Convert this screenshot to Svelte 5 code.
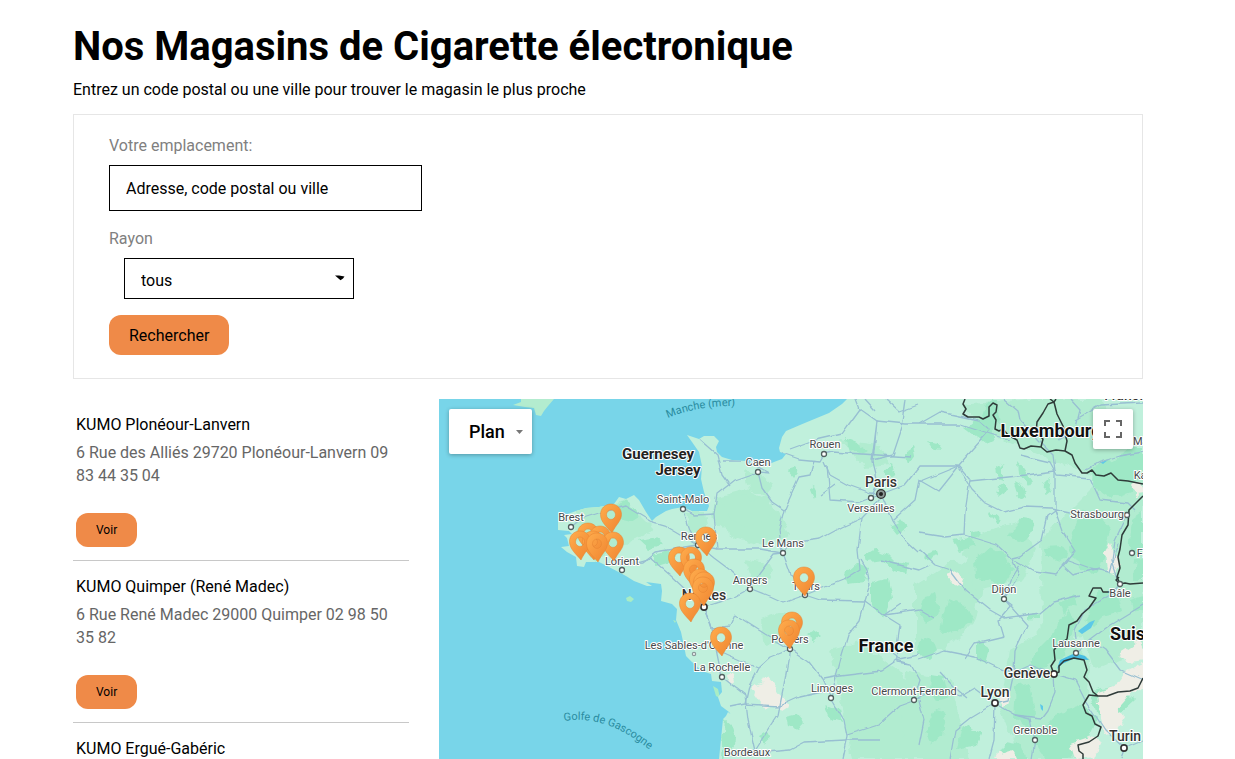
<script>
  const stores = [
    { name: 'KUMO Plonéour-Lanvern', address: '6 Rue des Alliés 29720 Plonéour-Lanvern 09 83 44 35 04' },
    { name: 'KUMO Quimper (René Madec)', address: '6 Rue René Madec 29000 Quimper 02 98 50 35 82' },
    { name: 'KUMO Ergué-Gabéric' }
  ];

  // Head centre of each store pin, back to front
  const pins = [
    [611, 515], [588, 534], [600, 537], [593, 542], [580, 542], [613, 543], [597, 544],
    [706, 538], [679, 558], [691, 558], [694, 570], [700, 580], [704, 583], [703, 588], [690, 604],
    [804, 578], [792, 623], [789, 631], [721, 638]
  ];

  // Label text, centre x, baseline y, kind
  const labels = [
    ['Brest', 571, 521, 'city'], ['Lorient', 622, 565, 'city'], ['Saint-Malo', 683, 503, 'city'],
    ['Rennes', 699, 540, 'city'], ['Caen', 758, 466, 'city'], ['Rouen', 825, 448, 'city'],
    ['Versailles', 871, 512, 'city'], ['Le Mans', 783, 547, 'city'], ['Angers', 750, 584, 'city'],
    ['Tours', 806, 590, 'city'], ['Poitiers', 790, 643, 'city'], ["Les Sables-d'Olonne", 694, 649, 'city'],
    ['La Rochelle', 722, 671, 'city'], ['Limoges', 832, 692, 'city'], ['Clermont-Ferrand', 914, 695, 'city'],
    ['Bordeaux', 747, 756, 'city'], ['Strasbourg', 1097, 518, 'city'], ['Dijon', 1004, 593, 'city'],
    ['Bâle', 1120, 597, 'city'], ['Lausanne', 1076, 647, 'city'], ['Grenoble', 1035, 734, 'city'],
    ['Fribourg', 1157, 557, 'city'], ['Mannheim', 1159, 445, 'city'], ['Karlsruhe', 1157, 479, 'city'],
    ['Paris', 881, 487, 'town'], ['Nantes', 704, 600, 'town'], ['Lyon', 995, 697, 'town'],
    ['Genève', 1027, 678, 'town'], ['Turin', 1125, 741, 'town'], ['Francfort', 1133, 400, 'town'],
    ['Guernesey', 658, 459, 'region'], ['Jersey', 678, 475, 'region'],
    ['France', 886, 652, 'country'], ['Luxembourg', 1051, 437, 'country'], ['Suisse', 1137, 640, 'country']
  ];

  const dots = [
    [571, 527], [622, 570], [683, 509], [698, 545], [758, 472], [824, 454], [871, 498], [783, 553],
    [750, 589], [805, 595], [790, 649], [722, 677], [831, 698], [914, 700], [1127, 515], [1004, 599],
    [1120, 584], [1076, 653], [1035, 740], [1132, 553]
  ];
  const bigDots = [[704, 607], [995, 703], [1054, 674], [1124, 748]];

  const roads = [
    'M856 399L860 409L849 424L842 434L812 441L790 449',
    'M860 409L877 421L906 424L960 424L1010 440',
    'M906 399L902 428L893 455L872 460L877 421L873 462L878 482L871 498',
    'M782 453L799 459L820 461L824 454L832 452L878 455L910 457',
    'M722 461L746 461L770 473L758 472L735 480L717 494L714 514L717 549L760 549L783 553',
    'M700 440L717 455L722 475L730 486',
    'M758 472L762 488L772 502L784 510L779 530L781 547L783 553',
    'M784 510L793 490L799 477L810 475L814 460',
    'M824 461L830 475L848 485L870 493L881 494L892 520L905 540L918 552',
    'M827 465L830 500L860 502L881 494L905 485L920 466L957 466',
    'M783 553L790 543L820 539L842 527L862 518L881 498',
    'M862 518L858 550L860 569L843 580L805 595',
    'M783 553L791 575L799 587L805 595L820 600L865 601L884 615L900 625L897 645L898 662L910 664',
    'M571 527L581 519L600 513L625 506L650 521L664 525L698 545L717 549',
    'M600 540L622 566L650 558L670 575L704 607',
    'M622 563L642 562L655 552L698 545L690 530L683 509L695 515L714 514',
    'M698 545L714 558L730 570L750 589L770 597L783 603L805 595',
    'M698 545L693 572L704 607L711 624L722 677',
    'M704 607L735 597L750 589L760 573L774 554L783 553',
    'M704 607L712 628L730 626L735 615L765 634L790 649',
    'M722 677L745 695L748 720L755 751L768 730L778 715L783 690L790 649',
    'M722 653L740 661L758 668L749 686L745 704L730 707',
    'M758 668L770 657L790 649L809 662L822 679L831 698L844 720L847 736L842 759',
    'M745 704L780 706L800 697L831 690',
    'M767 752L790 750L805 742L845 740L880 740',
    'M847 735L878 725L900 705L914 700L920 680L911 664L897 660L881 671L840 676L824 679',
    'M865 601L870 585L867 570L861 560',
    'M865 601L860 620L848 635L842 655L835 681L831 698',
    'M884 615L920 610L934 618M900 604L884 615M919 660L945 651L975 657L1000 669L1014 672',
    'M965 659L975 644L1004 637L999 620L1012 605L1004 599L1027 625L1015 651L1014 672L1008 700L995 703',
    'M919 480L938 491L958 466L990 430L978 420L940 412L919 424M958 466L970 480L965 512L964 535L945 537L919 533',
    'M919 482L958 466M970 481L1018 476L1055 471L1055 510L1048 515L1042 540L1020 556L1012 558',
    'M957 466L972 490L984 502L1004 512L1025 507L1050 508L1070 512',
    'M964 535L997 545L1012 559L1019 575L1004 599M1012 559L1035 572L1055 575L1068 560L1090 568L1110 572L1119 543',
    'M919 550L935 565L950 570L965 590L990 610L1004 618L1040 613L1053 602L1080 595',
    'M1055 471L1053 455L1038 440L1020 420L1018 410L1005 399',
    'M1020 455L1050 462L1057 475L1090 478L1100 500L1127 503L1134 510',
    'M1055 510L1062 530L1075 550L1062 565L1073 575L1100 568',
    'M1059 440L1075 430L1080 410L1070 399M1085 470L1100 462L1120 456L1143 452M1075 420L1100 405L1143 403',
    'M1127 515L1115 540L1112 560L1120 584L1110 595L1085 610L1075 630L1076 640',
    'M914 700L940 689L960 697L975 688L995 703L1015 715L1030 719L1035 740L1032 759',
    'M995 703L994 740L989 759M995 703L970 718L955 730L950 759M940 672L952 685L967 698',
    'M1014 672L1030 665L1054 674L1055 693L1048 710L1042 718L1015 715',
    'M1054 674L1075 680L1085 700L1105 730L1124 748L1143 740M1124 748L1120 759',
    'M1076 653L1090 640L1110 625L1143 605M1090 640L1105 650L1120 670L1143 680',
    'M919 655L900 659L880 645M919 700L924 720L919 745M865 399L875 410M886 399L900 412L919 405',
    'M880 560L919 570L930 565M893 520L915 500L919 480M835 484L820 495M1004 599L1010 580L1019 565'
  ];

  const woods = [
    'M614 505l12-4 8 6 5 9-8 5-12-3z', 'M655 553l12-3 9 5-7 7-14 4z', 'M574 536l14-4 9 6-11 6z', 'M640 540l12-2 10 7-12 4z',
    'M788 470l7-2 3 4-4 5z',
    'M809 490l6-4 2 4-4 9z', 'M845 437l12 5 12 8-8 3-15-6z', 'M903 454l11-7 2 10-10 6z', 'M884 471l10-8 3 11-10 4z',
    'M889 525l12-5 6 8-10 7z', 'M863 555l10-6 15 5 8 8 12 3-2 8-12-3-10-9-16 2z', 'M845 575l13-12 10 5-3 14-17 2z',
    'M870 583l18-4 4 18-8 20-8-6-6-12z', 'M806 635l8-5 8 6-7 6z', 'M786 716l9-2 8 9-5 6-10-4z',
    'M759 735l7-4 5 8-6 5z', 'M724 719l9 8 4 13-8 14-8 5z',
    'M825 705l14 5 3 12-11-3z',
    'M920 640l12-3 5 14-9 8-9-5z', 'M925 595l10-3 4 20-12 12-8-8z', 'M947 598l18 8 8 14-14 10-18 4 3-20z',
    'M953 539l16-3 6 10-16 5z', 'M970 532l9-2 1 6-10 3z', 'M925 553l12-3 1 5-14 5z', 'M975 558l13-11 15 5 10 19-9 14-28-7z',
    'M1012 530l10-12 12 2-4 14-10 8-12-4z', 'M1045 547l17-1 7 10-8 4-15-4z', 'M996 465l8 3 0 14-6-2z',
    'M1018 461l6 7 8 14-4 5-9-14z', 'M994 492l10-7 4 4-10 7z', 'M1015 482l7 4 3 14-6-3z', 'M1045 484l6-6-2 14-5 4z',
    'M990 512l11 10-4 3-9-9z', 'M985 405l10-6 5 22-8 10-12-10z', 'M925 440l12 3 6 8-12-2z', 'M964 428l12-10 14 8 5 14-10 4z',
    'M1094 465l18-5 20-13 11 0 0 25-10 18-22 8-18-11z',
    'M1080 511l20 4 10 14-5 25-8 20-16-7-12-18 6-22z', 'M1132 520l11-8 0 44-14-2z', 'M1135 560l8-2 0 22-10 0z',
    'M1100 590l18 5 4 16-20 6-10 10-8-8z', 'M1060 618l10-8 5 15-10 30-18 12-16 4 5-20 14-14z',
    'M1060 605l12-10 4 8-12 10z', 'M1130 600l13-4 0 14-10 2z', 'M1028 615l10-2 0 6-10 2z',
    'M1016 687l14-4 5 30-9 13-12-10z', 'M977 640l12 8-4 16-8-5z',
    'M935 710l12 3-4 22-12 10-6-14z', 'M962 725l20 8-5 12-20 4z', 'M930 675l14 2 5 20-12 5-8-10z',
    'M1055 715l28-10 14 16-10 20-20 18-22 0-12-18z', 'M1090 690l30-5 15 15-14 13-24 2z', 'M1005 742l15 3 8 14-32 0z'
  ];

  const tints = [
    'M716 497l30-8 30 20 14 25-25 12-30-8-24-20z', 'M722 500l14-7 16 8 14-6 8 12-9 14-17 5-12-3-10-10z', 'M745 470l16 4 13 12-8 10-18-5z',
    'M760 620l25-8 14 10-10 20-25 4z', 'M830 650l30-8 40 30 20 40-8 47-60 0-10-50z',
    'M915 585l40-25 30 10-10 50-30 30-30 0z', 'M960 540l60-20 15 30-10 30-50 10z', 'M1040 540l60-60 43-30 0 160-50 20-50 20z',
    'M960 405l70-6 70 0 30 50-30 30-50-20-50-20z', 'M1010 650l50-30 30 40-10 99-60 0-20-50z', 'M575 510l50-10 30 30-60 30-20-20z', 'M905 670l45 10 20 79-70 0z',
    'M840 440l40 5 10 20-25 3z', 'M685 512l20 0 4 25-18-5z', 'M744 560l24 4 5 15-20 6z', 'M1080 620l63-30 0 60-50 20z'
  ];
</script>

<main class="page">
  <h1>Nos Magasins de Cigarette électronique</h1>
  <p class="intro">Entrez un code postal ou une ville pour trouver le magasin le plus proche</p>

  <form class="search" onsubmit={(e) => e.preventDefault()}>
    <label for="place">Votre emplacement:</label>
    <input id="place" type="text" placeholder="Adresse, code postal ou ville" />
    <label for="radius">Rayon</label>
    <div class="select">
      <select id="radius"><option>tous</option></select>
      <svg width="10" height="6" viewBox="0 0 10 6" aria-hidden="true"><path d="M0 0.500L4 0.500L9.500 1.600L8 3.600L5.500 5.300L3.500 3.400Z" fill="#000" /></svg>
    </div>
    <button class="submit" type="submit">Rechercher</button>
  </form>

  <div class="results">
    <ul class="stores">
      {#each stores as store}
        <li>
          <h2>{store.name}</h2>
          {#if store.address}
            <p>{store.address}</p>
            <button type="button">Voir</button>
          {/if}
        </li>
      {/each}
    </ul>

    <section class="map">
      <svg class="canvas" viewBox="439 399 704 360" preserveAspectRatio="xMinYMin slice">
        <defs>
          <linearGradient id="pin" x1="0" y1="0" x2="1" y2="1">
            <stop offset="0" stop-color="#ffad4d" />
            <stop offset="1" stop-color="#ef8430" />
          </linearGradient>
          <filter id="rough" x="0" y="0" width="1" height="1">
            <feTurbulence type="fractalNoise" baseFrequency="0.09" numOctaves="3" seed="4" result="n" />
            <feDisplacementMap in="SourceGraphic" in2="n" scale="9" xChannelSelector="R" yChannelSelector="G" />
          </filter>
          <filter id="wobble" x="0" y="0" width="1" height="1">
            <feTurbulence type="fractalNoise" baseFrequency="0.06" numOctaves="2" seed="9" result="n" />
            <feDisplacementMap in="SourceGraphic" in2="n" scale="5" xChannelSelector="R" yChannelSelector="G" />
          </filter>
          <clipPath id="coast">
            <path d="M847 399L842 404L829 413L812 420L800 425L786 431L782 437L779 448L780 452L786 454L782 459L774 462L765 466L746 461L732 460L722 457L717 452L716 447L719 441L714 436L704 436L699 439L687 435L692 442L699 452L702 466L701 479L704 492L709 506L707 511L692 511L683 507L672 509L666 511L656 517L652 521L646 512L639 500L634 495L626 499L619 497L614 504L599 507L586 508L576 511L562 516L558 521L558 530L569 531L572 534L564 535L567 538L569 546L561 547L567 552L576 557L577 566L584 567L586 562L599 562L609 567L626 576L634 581L647 586L652 586L646 582L661 584L662 591L661 601L672 604L677 609L676 620L681 632L684 646L686 656L692 662L702 671L711 674L712 681L721 682L722 692L718 697L721 706L729 712L739 726L744 746L746 746L743 731L735 718L728 712L726 716L723 719L721 739L719 759V780H1160V380H847Z" />
          </clipPath>
        </defs>

        <rect x="439" y="399" width="704" height="360" fill="#78d5e9" />
        <path d="M513 405L521 402L521 399H554L548 406L544 411L541 416L536 415L534 408L525 407Z" fill="#b3eccf" />
        <path d="M626 598l4-2 4 3-3 3-4-1zM713 686l5 3 2 9-4-2zM673 620l3 1-1 2z" fill="#a8edc4" />

        <g clip-path="url(#coast)">
          <rect x="550" y="399" width="593" height="360" fill="#c0f0dc" />
          <g filter="url(#rough)">
            <g fill="#b1ecd0">{#each tints as d}<path {d} />{/each}</g>
            <g fill="#9ee8c6">{#each woods as d}<path {d} />{/each}</g>
            <g fill="#efeee6">
              <path d="M750 688l12-5 3-7 6 7 8 11 5 4 4 9-6 4-10-4-7 2-7-9z" />
              <path d="M725 676l8-3 2 7-7 3zM946 575l10-4 8 6-2 10-10-5zM1131 485l10-3 4 12-8 1zM1104 555l6-12 5 12 6 8-6 12-9-4zM1000 697l7-3 3 8-7 7zM998 754l14-4 4 9h-20z" />
              <path d="M1098 691l18-6 10-13 20-10v26l-18 7-14 16-14 6zM1118 656l22-14 8 18-20 2zM1070 744l18-6 14 3-8 18-18 2zM1100 717l14-9 12 8-10 16-10 2z" />
            </g>
          </g>
          <path d="M1057 669l3-9 15-7 10 3 4 4-16-1-11 5z" fill="#48bde4" />
          <path d="M1078 631l12-9 5-2-4 8-9 6zM1040 704l3 2 0 5-2-2zM1100 462l8-2-5 4z" fill="#5cc9e8" />
          <g filter="url(#wobble)" fill="none" stroke="#98bfd2" stroke-width="1.3" stroke-linejoin="round">
            {#each roads as d}<path {d} />{/each}
          </g>
        </g>

        <g fill="none" stroke="#2f3b39" stroke-width="1.5" stroke-linejoin="round">
          <path d="M965 399L963 404L966 409L963 414L968 417L979 417L983 419L989 416L989 407L993 403L997 405L996 412L993 415L996 420L995 429L999 431L1003 429L1008 435L1017 440L1020 448L1024 449L1031 446L1041 447L1047 452L1056 450L1065 451L1072 455L1075 463L1082 473L1087 473L1092 470L1096 475L1104 476L1111 473L1118 480L1128 481L1143 484" />
          <path d="M1041 447L1043 439L1036 433L1037 422L1043 413L1048 404L1054 402L1057 414L1063 426L1067 441L1065 451M1050 399L1054 402L1056 399" />
          <path d="M1143 496L1136 503L1129 510L1128 525L1122 535L1120 549L1118 557L1120 568L1117 577L1120 584L1125 583L1130 584L1143 583M1110 592L1103 592L1101 588L1093 588L1089 596L1096 598L1089 608L1082 614L1077 621L1069 625L1067 639L1058 645L1054 650L1055 660L1051 666L1054 674" />
          <path d="M1054 674L1059 672L1059 666L1064 661L1074 658L1084 660L1087 670L1084 677L1089 682L1093 692L1098 696L1107 696L1118 692L1130 691L1138 688L1143 678M1098 696L1089 695L1083 705L1086 713L1092 716L1095 724L1101 727L1098 736L1089 742L1078 745L1079 751L1083 754L1083 759" />
          <path d="M1120 584L1116 580L1119 577" />
        </g>

        <g fill="#fff" stroke="#51605f" stroke-width="1.3">
          {#each dots as [x, y]}<circle cx={x} cy={y} r="2.5" />{/each}
          <circle cx="694" cy="654" r="1.6" stroke="#8b999a" />
        </g>
        <g fill="#fff" stroke="#333" stroke-width="1.6">
          {#each bigDots as [x, y]}<circle cx={x} cy={y} r="3.1" />{/each}
        </g>
        <circle cx="881" cy="494" r="4.3" fill="#8f9b99" stroke="#333" stroke-width="1.3" />
        <circle cx="881" cy="494" r="2" fill="#222" />

        {#each labels as [text, x, y, kind]}
          <text class={kind} {x} {y}>{text}</text>
        {/each}
        <path id="channel" d="M668 418Q700 404 750 406" fill="none" />
        <path id="gulf" d="M564 721Q612 713 662 761" fill="none" />
        <text class="sea"><textPath href="#channel">Manche (mer)</textPath></text>
        <text class="sea"><textPath href="#gulf">Golfe de Gascogne</textPath></text>

        {#each pins as [x, y]}
          <path
            transform="translate({x} {y})"
            fill="url(#pin)"
            fill-rule="evenodd"
            stroke="#e58331"
            stroke-width="0.5"
            d="M0 -11C6 -11 10.5 -6.500 10.500 -0.500C10.500 6 4.500 10 1 18C-4 12 -10.500 7 -10.500 -0.500C-10.500 -6.500 -6 -11 0 -11ZM0 -5A4.500 4.700 0 1 0 0 4.400A4.500 4.700 0 1 0 0 -5Z"
          />
        {/each}
      </svg>

      <button class="control type" type="button">
        Plan
        <svg width="7" height="4" viewBox="0 0 7 4" aria-hidden="true"><path d="M0 0H7L3.500 4Z" fill="#777" /></svg>
      </button>
      <button class="control full" type="button" aria-label="Plein écran">
        <svg width="18" height="18" viewBox="0 0 18 18" aria-hidden="true">
          <path d="M1 6V1H6M12 1H17V6M17 12V17H12M6 17H1V12" fill="none" stroke="#666" stroke-width="2" />
        </svg>
      </button>
    </section>
  </div>
</main>

<style>
  :global(body) {
    margin: 0;
    background: #fff;
  }
  .page,
  .page * {
    box-sizing: border-box;
  }
  .page {
    display: flex;
    flex-direction: column;
    height: 100vh;
    padding: 23px 92px 0 73px;
    overflow: hidden;
    font-family: Roboto, sans-serif;
    font-size: 16px;
    line-height: 22px;
    color: #000;
  }
  h1,
  h2,
  p,
  ul {
    margin: 0;
    padding: 0;
  }
  h1 {
    font-size: 40px;
    line-height: 48px;
    font-weight: 700;
  }
  .intro {
    margin: 8px 0 13px;
  }
  button {
    border: 0;
    border-radius: 12px;
    background: #ef8a48;
    color: #000;
    font-family: inherit;
    cursor: pointer;
  }
  .search {
    display: flex;
    flex-direction: column;
    align-items: flex-start;
    padding: 20px 35px 23px;
    border: 1px solid #e6e6e6;
  }
  .search label {
    color: #808080;
  }
  input,
  select {
    border: 1px solid #000;
    border-radius: 0;
    padding: 0 16px;
    background: #fff;
    color: #000;
    font: inherit;
  }
  input {
    width: 313px;
    height: 46px;
    margin: 8px 0 17px;
  }
  input::placeholder {
    color: #000;
    opacity: 1;
  }
  .select {
    position: relative;
    margin: 8px 0 16px 15px;
  }
  select {
    display: block;
    width: 230px;
    height: 41px;
    padding-top: 4px;
    appearance: none;
  }
  .select svg {
    position: absolute;
    top: 17px;
    right: 9px;
    pointer-events: none;
  }
  .submit {
    height: 40px;
    padding: 0 20px;
    font-size: 16px;
  }
  .results {
    display: flex;
    flex: 1;
    gap: 30px;
    min-height: 0;
    margin-top: 20px;
  }
  .stores {
    flex: 0 0 336px;
    overflow: hidden;
    list-style: none;
  }
  li {
    padding: 15px 3px 13px;
    border-bottom: 1px solid #c8c8c8;
  }
  h2 {
    font-size: 16px;
    font-weight: 400;
    line-height: 22px;
  }
  li p {
    margin: 5px 0 26px;
    line-height: 23px;
    color: #666;
  }
  li button {
    display: block;
    height: 34px;
    padding: 0 20px;
    font-size: 12px;
  }
  .map {
    position: relative;
    flex: 1;
    min-width: 0;
    overflow: hidden;
  }
  .canvas {
    display: block;
    width: 100%;
    height: 100%;
  }
  .canvas text {
    fill: #45494b;
    stroke: #fff;
    stroke-width: 2px;
    stroke-linejoin: round;
    paint-order: stroke;
    text-anchor: middle;
    font-size: 11px;
  }
  .canvas .town {
    fill: #333;
    font-size: 14px;
    font-weight: 500;
  }
  .canvas .region {
    fill: #222;
    font-size: 15px;
    font-weight: 700;
  }
  .canvas .country {
    fill: #111;
    font-size: 18px;
    font-weight: 700;
  }
  .canvas .sea {
    fill: #2a8ca0;
    stroke: none;
    text-anchor: start;
  }
  .control {
    position: absolute;
    top: 10px;
    display: flex;
    align-items: center;
    justify-content: center;
    border-radius: 2px;
    background: #fff;
    box-shadow: 0 1px 4px rgba(0, 0, 0, 0.3);
  }
  .type {
    left: 10px;
    gap: 11px;
    height: 45px;
    padding: 0 9px 0 20px;
    font-size: 18px;
    font-weight: 500;
  }
  .full {
    right: 10px;
    width: 40px;
    height: 40px;
    padding: 0;
  }
</style>
